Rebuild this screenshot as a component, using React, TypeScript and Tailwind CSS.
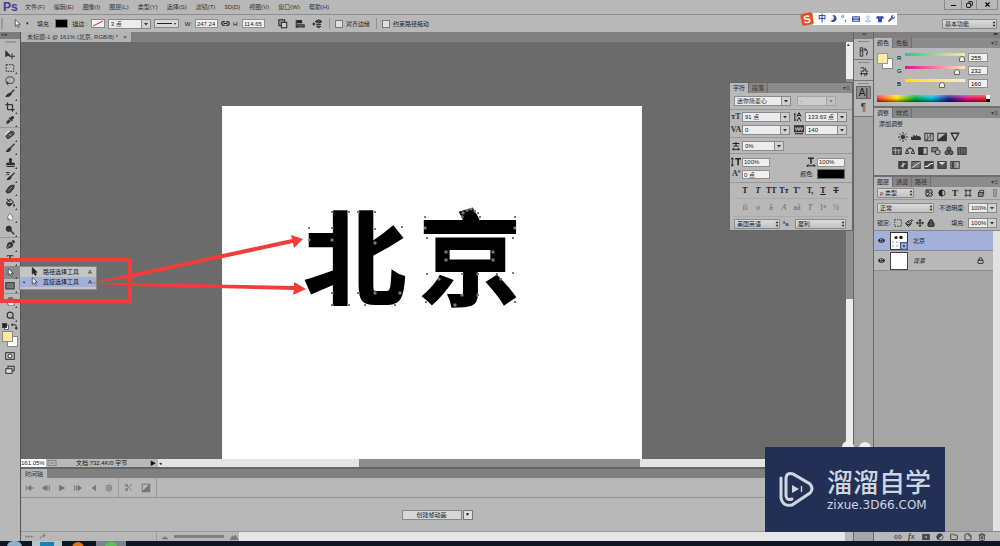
import React, { useState } from 'react';
import {
  FaBandAid, FaEraser, FaEye, FaEyeDropper, FaFillDrip, FaHandPaper,
  FaPenNib, FaStamp, FaTint, FaTshirt, FaWrench, FaMoon, FaKeyboard,
} from 'react-icons/fa';
import {
  Crop, Folder, Image, Lasso, Link2, Lock, Minus, Move, Paintbrush, Scissors,
  Search, Settings, StickyNote, Trash2, X, Copy,
} from 'lucide-react';

const menus = ['文件(F)', '编辑(E)', '图像(I)', '图层(L)', '类型(Y)', '选择(S)', '滤镜(T)', '3D(D)', '视图(V)', '窗口(W)', '帮助(H)'];

// 12x12 line icons
const Ic: React.FC<{ children: React.ReactNode; className?: string }> = ({ children, className = 'h-[10px] w-[10px]' }) => (
  <svg viewBox="0 0 12 12" className={`${className} shrink-0`} fill="none" stroke="currentColor" strokeWidth="1.2">
    {children}
  </svg>
);

const CursorIcon = ({ hollow = false }: { hollow?: boolean }) => (
  <Ic className="h-[9px] w-[9px]">
    <path d="M3 0.8 V9.6 L5.2 7.6 L6.8 11.2 L8.4 10.4 L6.8 7 H9.6 Z" fill={hollow ? '#fff' : '#222'} stroke="#222" strokeWidth="0.9" />
  </Ic>
);

type SelectProps = { label: string; options: string[]; className: string; arrow?: 'box' | 'updown'; disabled?: boolean };

const Select: React.FC<SelectProps> = ({ label, options, className, arrow = 'box', disabled }) => (
  <span className={`relative inline-flex h-[10px] shrink-0 ${className} ${disabled ? 'opacity-40' : ''}`}>
    <select
      aria-label={label}
      disabled={disabled}
      className={`h-full w-full appearance-none border border-[#8a8a8a] pl-[2px] leading-none text-[#222] outline-none ${arrow === 'box' ? 'bg-[#ececec]' : 'rounded-[1px] bg-linear-to-b from-[#dadada] to-[#c2c2c2]'}`}
    >
      {options.map(o => <option key={o}>{o}</option>)}
    </select>
    {arrow === 'box' ? (
      <svg viewBox="0 0 10 10" className="pointer-events-none absolute right-0 top-0 h-[10px] w-[10px]">
        <rect x="0.5" y="0.5" width="9" height="9" fill="#d0d0d0" stroke="#8a8a8a" />
        <path d="M3 4 H7 L5 6.5 Z" fill="#333" />
      </svg>
    ) : (
      <svg viewBox="0 0 6 10" className="pointer-events-none absolute right-0 top-0 h-[10px] w-[6px]">
        <path d="M1.5 4.3 L3 2 L4.5 4.3 Z M1.5 5.7 L3 8 L4.5 5.7 Z" fill="#333" />
      </svg>
    )}
  </span>
);

const Field: React.FC<{ label: string; value: string; className: string }> = ({ label, value, className }) => (
  <input
    aria-label={label}
    defaultValue={value}
    className={`h-[9px] shrink-0 border border-[#8f8f8f] bg-[#f0f0f0] px-px leading-none text-[#222] outline-none ${className}`}
  />
);

const PanelTabs: React.FC<{ tabs: string[] }> = ({ tabs }) => (
  <div className="flex h-[10px] shrink-0 items-stretch bg-[#8b8b8b]" role="tablist">
    {tabs.map((t, i) => (
      <button
        key={t}
        role="tab"
        aria-selected={i === 0}
        className={`border-r border-[#6f6f6f] px-[3px] leading-none ${i === 0 ? 'bg-[#b8b8b8] text-[#222]' : 'bg-[#868686] text-[#333]'}`}
      >
        {t}
      </button>
    ))}
    <button aria-label="面板菜单" className="ml-auto pr-[2px] leading-none text-[#444]">▾≡</button>
  </div>
);

const toolGroups: { height: string; tools: { name: string; icon: React.ReactNode }[] }[] = [
  {
    height: 'h-20',
    tools: [
      { name: '移动工具', icon: <Ic><path d="M1 1 V8 L3 6.5 H6 Z" fill="currentColor" /><path d="M8.5 4 V11 M5 7.5 H12" /></Ic> },
      { name: '矩形选框工具', icon: <Ic><rect x="1.5" y="2" width="9" height="8" strokeDasharray="2 1.2" /></Ic> },
      { name: '套索工具', icon: <Lasso className="h-[10px] w-[10px]" /> },
      { name: '快速选择工具', icon: <Ic><path d="M11 1 L6 6" strokeWidth="1.8" /><path d="M6.5 5 Q3 5 1 9 Q6 9.5 7.5 6.5 Z" fill="currentColor" /></Ic> },
      { name: '裁剪工具', icon: <Crop className="h-[10px] w-[10px]" strokeWidth={3} /> },
      { name: '吸管工具', icon: <FaEyeDropper className="h-2 w-2" /> },
    ],
  },
  {
    height: 'h-[110px]',
    tools: [
      { name: '污点修复画笔工具', icon: <Ic><path d="M2 9.5 Q0.5 8 2 6 L7 1.8 Q9 0.8 10.5 2.5 Q11.5 4 10 6 L5.5 9.5 Q3.5 11 2 9.5 Z" fill="#555" /><path d="M1 6 Q1 2 5 1.5" stroke="#eee" /><path d="M5 5 L7.5 7" stroke="#bbb" /></Ic> },
      { name: '画笔工具', icon: <Ic><path d="M11.5 1 L5.5 7" strokeWidth="1.6" /><path d="M6 6 Q3 6.5 1.5 10.5 Q6.5 10.5 7 7.5 Z" fill="currentColor" /></Ic> },
      { name: '仿制图章工具', icon: <FaStamp className="h-[9px] w-[9px]" /> },
      { name: '历史记录画笔工具', icon: <Ic><path d="M11.5 2 L6 7.5" strokeWidth="1.6" /><path d="M6.5 6.5 Q4 7 2.5 10.5 Q7 10.5 7.5 8 Z" fill="currentColor" /><path d="M1 2 H6 M1.5 5 Q3 3 5 4.5" /></Ic> },
      { name: '橡皮擦工具', icon: <Ic><path d="M1 9 L5 3 L8.5 1.5 H11 L10.5 5 L6.5 10 L3 11 Z" fill="#444" /><path d="M3.5 8.5 L8.5 3.5" stroke="#999" strokeWidth="0.8" /></Ic> },
      { name: '油漆桶工具', icon: <FaFillDrip className="h-[9px] w-[9px]" /> },
      { name: '模糊工具', icon: <FaTint className="h-2 w-2 fill-[#f2f2f2] stroke-[#555] stroke-[40px]" /> },
      { name: '减淡工具', icon: <Ic><circle cx="4.5" cy="4.5" r="3.2" fill="currentColor" /><path d="M7 7 L11 11" strokeWidth="1.8" /></Ic> },
    ],
  },
  {
    height: 'h-14',
    tools: [
      { name: '钢笔工具', icon: <FaPenNib className="h-[9px] w-[9px]" /> },
      { name: '横排文字工具', icon: <span className="font-['Liberation_Serif',serif] text-[10px] leading-none font-bold">T</span> },
      { name: '直接选择工具', icon: <CursorIcon hollow /> },
      { name: '矩形工具', icon: <Ic><rect x="1" y="2" width="10" height="7.5" fill="#777" /></Ic> },
    ],
  },
  {
    height: 'h-7',
    tools: [
      { name: '抓手工具', icon: <FaHandPaper className="h-[9px] w-[9px] fill-[#eee] stroke-[#444] stroke-[50px]" /> },
      { name: '缩放工具', icon: <Search className="h-[9px] w-[9px]" strokeWidth={3} /> },
    ],
  },
];

const ToolMenu = () => (
  <ul role="menu" className="absolute top-0 left-[19px] z-20 w-[78px] border border-[#8a8a8a] bg-[#c4c4c4] pb-[2px] text-left text-[#111]">
    {['路径选择工具', '直接选择工具'].map((name, i) => (
      <li key={name} role="none">
        <button role="menuitemradio" aria-checked={i === 1} className={`flex h-[10px] w-full items-center gap-[4px] pr-[4px] pl-[2px] leading-none ${i === 1 ? 'bg-[#a3b1d9]' : ''}`}>
          <span className="w-[4px]">{i === 1 ? '•' : ''}</span>
          <CursorIcon hollow={i === 1} />
          {name}
          <span className="ml-auto">A</span>
        </button>
      </li>
    ))}
  </ul>
);

const Toolbox = () => (
  <aside className="relative z-10 flex w-[21px] shrink-0 flex-col border-r border-[#555] bg-[#b8b8b8] text-[#333]">
    <div className="h-[7px] shrink-0 bg-[#7c7c7c] pl-[2px] text-[5px] leading-none text-[#333]">▸▸</div>
    <div className="flex h-[9px] shrink-0 items-start justify-center pt-[2px]"><div className="h-[2px] w-[11px] bg-[#999]" /></div>
    {toolGroups.map((g, gi) => (
      <div key={gi} className={`flex ${g.height} shrink-0 flex-col ${gi < 3 ? 'border-b border-[#9a9a9a]' : ''}`}>
        {g.tools.map(t => (
          <div key={t.name} className="relative flex flex-1">
            <button
              aria-label={t.name}
              title={t.name}
              className={`flex flex-1 items-center justify-center ${t.name === '直接选择工具' ? 'bg-[#8b8b8b]' : ''}`}
            >
              {t.icon}
            </button>
            {t.name !== '移动工具' && (
              <svg viewBox="0 0 2 2" className="absolute right-[3px] bottom-0 h-[2px] w-[2px]"><path d="M2 0 V2 H0 Z" fill="#333" /></svg>
            )}
            {t.name === '直接选择工具' && <ToolMenu />}
          </div>
        ))}
      </div>
    ))}
    <div className="flex h-[9px] items-center justify-between px-[2px]">
      <Ic className="h-[7px] w-[7px]"><rect x="4" y="4" width="7" height="7" fill="#fff" /><rect x="1" y="1" width="7" height="7" fill="#222" /></Ic>
      <Ic className="h-[7px] w-[7px]"><path d="M1 3 H6 Q9 3 9 6 V10 M3 1 L1 3 L3 5 M7 8 L9 10.5 L11 8" strokeWidth="1.8" /></Ic>
    </div>
    <div className="grid h-[16px] w-[18px] shrink-0 grid-cols-3 grid-rows-3 pl-[2px]">
      <div className="col-start-2 col-end-4 row-start-2 row-end-4 border border-[#888] bg-white" />
      <div className="col-start-1 col-end-3 row-start-1 row-end-3 border border-[#888] bg-[#ffe8a0]" />
    </div>
    <div className="flex flex-col items-center gap-[4px] pt-[4px]">
      <button aria-label="快速蒙版"><Ic><rect x="0.8" y="2" width="10.4" height="8" /><circle cx="6" cy="6" r="2.4" fill="#fff" /></Ic></button>
      <button aria-label="屏幕模式"><Ic><rect x="3.5" y="1.5" width="7.5" height="5.5" /><rect x="1" y="4.5" width="7.5" height="5.5" fill="#ddd" /></Ic></button>
    </div>
  </aside>
);

const MenuBar = () => (
  <header className="flex h-[15px] shrink-0 items-center border-b border-[#8e8e8e] pl-[3px]">
    <span className="w-[22px] text-[12px] leading-none font-bold text-[#3d3d98]">Ps</span>
    <nav className="flex gap-[9px]">
      {menus.map(m => <button key={m} className="leading-none text-[#333]">{m}</button>)}
    </nav>
    <div className="mr-[2px] ml-auto flex h-[10px] self-start border border-t-0 border-[#8a8a8a]">
      <button aria-label="最小化" className="flex w-[17px] items-end justify-center border-r border-[#8a8a8a]"><Minus className="h-[7px] w-[7px]" strokeWidth={4} /></button>
      <button aria-label="还原" className="flex w-[15px] items-center justify-center border-r border-[#8a8a8a]"><Copy className="h-[7px] w-[7px] -scale-x-100" strokeWidth={3} /></button>
      <button aria-label="关闭" className="flex w-[20px] items-center justify-center"><X className="h-[7px] w-[7px]" strokeWidth={4} /></button>
    </div>
  </header>
);

const OptionsBar = () => (
  <div className="flex h-[17px] shrink-0 items-center gap-[3px] pr-[3px] pl-[1px] text-[#222]">
    <div className="h-[11px] w-[2px] bg-[#999]" />
    <div className="ml-[7px] flex items-center gap-[4px]"><CursorIcon hollow /><span className="text-[5px]">▾</span></div>
    <span className="ml-[5px]">填充 :</span>
    <button aria-label="填充颜色" className="h-[9px] w-[13px] border border-[#777] bg-black" />
    <span className="ml-px">描边 :</span>
    <button aria-label="描边颜色" className="h-[9px] w-[14px] border border-[#888] bg-[#f4f4f4]">
      <svg viewBox="0 0 12 7" className="h-full w-full"><path d="M1 6 L11 1" stroke="#d22" /></svg>
    </button>
    <Select label="描边宽度" options={['3 点']} className="w-[43px]" />
    <button aria-label="描边类型" className="flex h-[9px] w-[25px] items-center gap-[2px] border border-[#888] bg-[#d8d8d8] px-[2px] text-[4px] leading-none">
      <i className="h-px flex-1 bg-[#222]" />▾
    </button>
    <span className="ml-[3px]">W:</span>
    <Field label="宽度" value="247.24" className="w-[23px]" />
    <Link2 className="h-[9px] w-[9px]" strokeWidth={3} />
    <span>H:</span>
    <Field label="高度" value="114.65" className="w-[23px]" />
    <div className="ml-[10px] flex gap-[7px]">
      <Ic><rect x="1" y="1" width="7" height="7" fill="#999" /><rect x="4" y="4" width="6.5" height="6.5" fill="#ccc" /></Ic>
      <Ic><path d="M1.5 1 V11" /><rect x="3" y="2" width="5" height="2.6" fill="currentColor" /><rect x="3" y="7" width="8" height="2.6" fill="#777" /></Ic>
      <Ic><path d="M0.5 6 H4 M2.2 4 V8" /><path d="M4 3 L8 1 L12 3 L8 5 Z M5 6 L8 7.5 L11 6 M5 8.5 L8 10.5 L11 8.5" fill="#555" /></Ic>
    </div>
    <div className="ml-[4px] h-[11px] w-px bg-[#929292]" />
    <label className="ml-[2px] flex items-center gap-[3px]">
      <input type="checkbox" className="h-[8px] w-[8px] appearance-none border border-[#777] bg-[#dedede]" />对齐边缘
    </label>
    <div className="ml-[3px] h-[11px] w-px bg-[#929292]" />
    <label className="ml-[2px] flex items-center gap-[3px]">
      <input type="checkbox" className="h-[8px] w-[8px] appearance-none border border-[#777] bg-[#dedede]" />约束路径拖动
    </label>
    <div className="ml-auto flex">
      <Select label="工作区" options={['基本功能']} className="w-[55px]" arrow="updown" />
    </div>
  </div>
);

// Path anchors, in pixels from the top left of the lettering
const anchors = [
  [32, 17], [49, 17], [58, 17], [75, 17], [9, 33], [32, 33], [9, 45], [32, 45], [75, 34], [102, 32], [75, 48],
  [32, 98], [49, 110], [32, 110], [58, 98], [75, 98], [100, 98], [65, 110], [95, 110],
  [125, 22], [162, 22], [180, 22], [215, 22], [215, 33], [125, 33], [163, 18], [167, 15], [171, 14], [175, 16], [178, 18],
  [127, 43], [213, 43], [213, 78], [197, 79], [127, 79], [146, 57], [193, 57], [193, 65], [146, 65],
  [139, 84], [126, 107], [162, 79], [178, 79], [178, 100], [162, 100], [155, 110], [201, 84], [215, 107],
];

const Artboard = () => (
  <div className="relative min-h-[354px] w-[420px] bg-white">
    <div className="flex gap-[13px] pt-[96px] pl-[82px] font-['Noto_Sans_CJK_SC',sans-serif] text-[102px] leading-none font-bold text-black [-webkit-text-stroke:2px_black]">
      <span>北</span>
      <span>京</span>
    </div>
    <svg viewBox="0 0 230 120" className="absolute top-[89px] left-[78px] h-[120px] w-[230px]">
      {anchors.map(([x, y]) => (
        <rect key={`${x}-${y}`} x={x - 1} y={y - 1} width="2" height="2" fill="#111" stroke="#fff" strokeWidth="0.5" />
      ))}
    </svg>
  </div>
);

const DocumentView = () => (
  <section className="flex min-h-0 flex-1 flex-col">
    <div className="flex h-[10px] shrink-0 bg-[#808080]">
      <div className="flex items-center gap-[5px] bg-[#b4b4b4] pr-[4px] pl-[6px] leading-none text-[#333]">
        未标题-1 @ 161% (北京, RGB/8) *
        <button aria-label="关闭文档" className="leading-none">×</button>
      </div>
    </div>
    <div className="flex min-h-0 flex-1">
      <div className="flex min-w-0 flex-1 flex-col">
        <div className="min-h-0 flex-1 overflow-hidden bg-[#6b6b6b] pt-16 pl-[201px]"><Artboard /></div>
        <div className="flex h-[8px] shrink-0 items-center bg-[#b8b8b8] leading-none text-[#111]">
          <div className="h-full w-[25px] bg-white pt-px">161.05%</div>
          <Ic className="h-[8px] w-[12px]"><rect x="0" y="2" width="12" height="8" stroke="#777" /><path d="M3 6 H9" stroke="#777" /></Ic>
          <span className="ml-[18px]">文档:732.4K/0 字节</span>
          <span className="ml-auto" />
          <div className="flex h-full w-[696px] items-center">
            <span className="w-[8px]">▶</span>
            <div className="flex h-full flex-1 items-center bg-[#e4e4e4]">
              <span className="w-[201px] pl-px text-[5px]">◂</span>
              <div className="h-full w-[281px] bg-[#8d8d8d]" />
            </div>
          </div>
        </div>
      </div>
      <div className="flex w-[7px] shrink-0 flex-col bg-[#ececec]">
        <span className="h-[8px] pl-px text-[5px] leading-none text-[#333]">▴</span>
        <div className="mt-[29px] h-[220px] bg-[#8d8d8d]" />
      </div>
    </div>
  </section>
);

const Timeline = () => (
  <section className="shrink-0 border-t-2 border-[#666] bg-[#b8b8b8] text-[#777]">
    <div className="flex h-[9px] bg-[#808080]">
      <button className="bg-[#b4b4b4] px-[4px] leading-none text-[#333]">时间轴</button>
    </div>
    <div className="flex h-[20px] items-center border-b border-[#939393] pl-[4px]">
      <div className="flex h-full items-center gap-[6px] border-r border-[#999] pr-[5px]">
        {[
          <path key="a" d="M1.5 3 V9 M11 6 H7 M7 3 L3 6 L7 9 Z" fill="currentColor" />,
          <path key="b" d="M6 3 L2 6 L6 9 Z M8 3 V9 M10 3 V9" fill="currentColor" />,
          <path key="c" d="M3 3 L9 6 L3 9 Z" fill="currentColor" />,
          <path key="d" d="M6 3 L10 6 L6 9 Z M4 3 V9 M2 3 V9" fill="currentColor" />,
          <path key="e" d="M8 3 L4 6 L8 9 Z" fill="currentColor" />,
        ].map((d, i) => <button key={i} aria-label="播放控制"><Ic>{d}</Ic></button>)}
        <button aria-label="设置"><Settings className="h-[8px] w-[8px]" strokeWidth={3} /></button>
      </div>
      <div className="flex h-full items-center gap-[8px] border-r border-[#999] px-[5px]">
        <button aria-label="剪切"><Scissors className="h-[9px] w-[9px]" strokeWidth={2.5} /></button>
        <button aria-label="过渡"><Ic><rect x="1.5" y="1.5" width="9" height="9" /><path d="M10 2 V10 H2 Z" fill="currentColor" /></Ic></button>
      </div>
    </div>
    <div className="flex h-[33px] items-center justify-center gap-px text-[#111]">
      <button className="h-[10px] w-[60px] border border-[#888] bg-[#d6d6d6] leading-none">创建帧动画</button>
      <button aria-label="选择动画类型" className="flex h-[10px] w-[10px] items-center justify-center border border-[#777] bg-[#dedede] text-[5px] leading-none">▼</button>
    </div>
    <div className="flex h-[10px] items-center border-t border-[#999] pl-[3px]">
      <div className="flex w-[133px] items-center gap-[5px] border-r border-[#999]">
        <Ic className="h-[7px] w-[10px]"><path d="M0 6 H3 M4.5 6 H7.5 M9 6 H12" strokeWidth="3" /></Ic>
        <Ic className="h-[7px] w-[8px]"><path d="M1 10 Q2 4 8 4 M6 1 L10 4 L6 7" strokeWidth="1.6" /></Ic>
      </div>
      <div className="flex w-[82px] items-center gap-[5px] pl-[4px]">
        <Ic className="h-[6px] w-[8px]"><path d="M0 10 L6 5 L12 10 Z" fill="currentColor" /></Ic>
        <div className="h-[3px] flex-1 bg-[#808080]" />
        <Ic className="h-[8px] w-[10px]"><path d="M0 10 L4 4 L6 7 L8 3 L12 10 Z" fill="currentColor" /></Ic>
      </div>
      <div className="h-full flex-1 bg-[#e6e6e6]" />
      <div className="w-[8px]" />
    </div>
  </section>
);

const Dock = () => (
  <aside className="flex w-[21px] shrink-0 flex-col border-x border-[#666] bg-[#a5a5a5] text-[#333]">
    <div className="h-[7px] bg-[#808080] text-center text-[4px] leading-none">◂◂</div>
    <div className="flex h-[21px] flex-col items-center gap-[5px] border-b border-[#777] bg-[#b8b8b8] pt-[2px]">
      <i className="h-px w-[11px] bg-[#888]" />
      <Ic><path d="M1.5 1 H4.5 V11 H1.5 Z M1.5 4.5 H4.5" /><path d="M6.5 3 H9 Q11 5 9 10 M8 1 L6 3 L8 5" /></Ic>
    </div>
    <div className="flex h-[21px] flex-col items-center gap-[4px] border-b border-[#777] bg-[#b8b8b8] pt-[2px]">
      <i className="h-px w-[11px] bg-[#888]" />
      <Ic><path d="M2 1 H6 V5 H2 M8 1 V5 H11 M1 8 H11 M3 6.5 V10 M7 8 V11 M9 6.5 V10" /></Ic>
    </div>
    <div className="flex h-[36px] flex-col items-center gap-[2px] border-b border-[#777] bg-[#b8b8b8] pt-[2px]">
      <i className="h-px w-[11px] bg-[#888]" />
      <button aria-label="字符" className="h-[13px] w-[15px] border border-[#666] bg-[#8e8e8e] text-[10px] leading-none text-[#222]">A|</button>
      <button aria-label="段落" className="h-[13px] text-[10px] leading-none">¶</button>
    </div>
  </aside>
);

const channels = [
  { name: 'R', value: 255, track: 'bg-[linear-gradient(to_right,#2fc68c,#ffe8a0)]' },
  { name: 'G', value: 232, track: 'bg-[linear-gradient(to_right,#e0109a,#ffe8a0)]' },
  { name: 'B', value: 160, track: 'bg-[linear-gradient(to_right,#ffdf10,#f4ecd8)]' },
];

const ColorPanel = () => {
  const [rgb, setRgb] = useState(channels.map(c => c.value));
  return (
    <section className="h-[68px] shrink-0">
      <PanelTabs tabs={['颜色', '色板']} />
      <div className="flex gap-[4px] px-[3px] pt-[5px]">
        <div className="grid h-[16px] w-[16px] shrink-0 grid-cols-3 grid-rows-3">
          <div className="col-start-2 col-end-4 row-start-2 row-end-4 border border-[#888] bg-white" />
          <div className="col-start-1 col-end-3 row-start-1 row-end-3 border border-[#999] bg-[#ffe8a0]" />
        </div>
        <div className="flex min-w-0 flex-1 flex-col gap-[4px] pr-[9px]">
          {channels.map((c, i) => (
            <div key={c.name} className="flex h-[9px] items-center gap-[3px]">
              <label htmlFor={`ch-${c.name}`} className="w-[5px] shrink-0 leading-none">{c.name}</label>
              <input
                id={`ch-${c.name}`}
                type="range"
                min={0}
                max={255}
                value={rgb[i]}
                onChange={e => setRgb(rgb.map((v, k) => (k === i ? Number(e.target.value) : v)))}
                className={`h-[9px] w-0 min-w-0 flex-1 appearance-none bg-[length:100%_3px] bg-top bg-no-repeat ${c.track} [&::-webkit-slider-thumb]:mt-[3px] [&::-webkit-slider-thumb]:h-[6px] [&::-webkit-slider-thumb]:w-[6px] [&::-webkit-slider-thumb]:appearance-none [&::-webkit-slider-thumb]:rounded-t-full [&::-webkit-slider-thumb]:border [&::-webkit-slider-thumb]:border-[#666] [&::-webkit-slider-thumb]:bg-[#eee]`}
              />
              <input aria-label={`${c.name} 值`} value={rgb[i]} readOnly className="h-[9px] w-[20px] shrink-0 border border-[#8f8f8f] bg-[#f0f0f0] px-[2px] leading-none" />
            </div>
          ))}
        </div>
      </div>
      <div className="mx-[3px] mt-[7px] flex h-[7px] pr-[7px]">
        <div className="flex-1 bg-[linear-gradient(to_bottom,rgba(255,255,255,.35),transparent,rgba(0,0,0,.55)),linear-gradient(to_right,#e33,#fd0_18%,#0a4_35%,#0bd_50%,#228_66%,#d18_82%,#e22)]" />
        <div className="flex w-[4px] flex-col"><i className="flex-1 bg-white" /><i className="flex-1 bg-black" /></div>
      </div>
    </section>
  );
};

const adjustRows: React.ReactNode[][] = [
  [
    <g key="1"><circle cx="6" cy="6" r="2.2" fill="currentColor" /><path d="M6 0 V2.5 M6 9.5 V12 M0 6 H2.5 M9.5 6 H12 M2 2 L3.5 3.5 M8.5 8.5 L10 10 M10 2 L8.5 3.5 M2 10 L3.5 8.5" /></g>,
    <path key="2" d="M0.5 9 V6 L2 7 L3.5 4 L5 7 L6.5 4 L8 6 L9.5 5 L11.5 7 V9 Z" fill="currentColor" />,
    <g key="3"><rect x="1" y="1.5" width="10" height="9" /><path d="M1 10 Q6 9 6 6 T11 2 M4 2 V10 M8 2 V10" strokeWidth="0.8" /></g>,
    <g key="4"><rect x="1" y="1.5" width="10" height="9" /><path d="M11 2 V10 H1 Z" fill="currentColor" /></g>,
    <path key="5" d="M1.5 1.5 H10.5 L6 10 Z" strokeWidth="1.6" />,
  ],
  [
    <g key="1"><rect x="1" y="2" width="10" height="8" fill="#555" /><path d="M1 5 H11 M4 2 V10 M8 5 V10" stroke="#ccc" strokeWidth="0.8" /></g>,
    <path key="2" d="M6 1 V4 M2 4 Q6 1 10 4 M0.5 9 L2.5 4 L4.5 9 Z M7.5 9 L9.5 4 L11.5 9 Z" />,
    <g key="3"><rect x="1" y="2" width="10" height="8" /><rect x="1" y="2" width="5" height="8" fill="currentColor" /></g>,
    <g key="4"><rect x="1" y="2" width="7" height="5" fill="#888" /><circle cx="8" cy="7.5" r="3" fill="#aaa" /></g>,
    <g key="5" fill="#666"><circle cx="6" cy="3.6" r="2.4" /><circle cx="3.5" cy="8" r="2.4" /><circle cx="8.5" cy="8" r="2.4" /></g>,
    <g key="6"><rect x="1" y="2" width="10" height="8" fill="#777" /><path d="M1 4.6 H11 M1 7.4 H11 M4.3 2 V10 M7.6 2 V10" strokeWidth="0.7" /></g>,
  ],
  [
    <g key="1"><rect x="1" y="2" width="10" height="8" fill="#444" /><path d="M3 8 L9 4 M6 3 V9" stroke="#ddd" /></g>,
    <g key="2"><rect x="1" y="2" width="10" height="8" fill="#777" /><path d="M1 9 L5 7 L7 5 L11 3" stroke="#ddd" /></g>,
    <g key="3"><rect x="1" y="2" width="10" height="8" fill="#444" /><path d="M1 8 Q5 8 6 6 T11 4" stroke="#eee" strokeWidth="1.6" /></g>,
    <g key="4"><rect x="1" y="2" width="10" height="8" fill="#555" /><path d="M2 2.5 L6 6 L10 2.5 Z" fill="#ddd" stroke="none" /></g>,
    <g key="5"><rect x="1" y="2" width="10" height="8" /><rect x="2" y="2.5" width="3" height="7" fill="#444" stroke="none" /><rect x="5" y="2.5" width="3" height="7" fill="#888" stroke="none" /></g>,
  ],
];

const AdjustPanel = () => (
  <section className="h-[69px] shrink-0 border-t-2 border-[#6f6f6f]">
    <PanelTabs tabs={['调整', '样式']} />
    <p className="pt-[2px] pl-[5px] leading-[8px] text-[#222]">添加调整</p>
    <div className="flex flex-col gap-[4px] pt-[4px] pr-[16px]">
      {adjustRows.map((row, i) => (
        <div key={i} className="flex justify-center gap-[3px] text-[#333]">
          {row.map((d, k) => <button key={k} aria-label={`调整 ${i + 1}-${k + 1}`}><Ic>{d}</Ic></button>)}
        </div>
      ))}
    </div>
  </section>
);

const LayersPanel = () => (
  <section className="flex min-h-0 flex-1 flex-col border-t-2 border-[#6f6f6f] text-[#222]">
    <PanelTabs tabs={['图层', '通道', '路径']} />
    <div className="flex h-[13px] shrink-0 items-center gap-[5px] border-b border-[#999] px-[3px]">
      <Select label="筛选类型" options={['ρ 类型']} className="w-[37px]" arrow="updown" />
      <span className="w-px" />
      <Image className="h-[8px] w-[8px]" strokeWidth={3} />
      <Ic className="h-[8px] w-[8px]"><circle cx="6" cy="6" r="4.6" /><path d="M6 1.4 A4.6 4.6 0 0 0 6 10.6 Z" fill="currentColor" /></Ic>
      <span className="w-[8px] text-center font-['Liberation_Serif',serif] text-[9px] leading-none font-bold">T</span>
      <Ic className="h-[8px] w-[8px]"><path d="M3 0 V12 M9 0 V12 M1 2.5 H11 M1 9.5 H11" /></Ic>
      <Ic className="h-[8px] w-[8px]"><rect x="2" y="5" width="7" height="6" fill="#888" /><path d="M4 5 V2 H10 V8" /></Ic>
      <i className="ml-auto h-[8px] w-[4px] border border-[#888] bg-[#999]" />
    </div>
    <div className="flex h-[16px] shrink-0 items-center gap-[3px] px-[3px]">
      <Select label="混合模式" options={['正常']} className="w-[57px]" arrow="updown" />
      <span className="ml-auto">不透明度:</span>
      <Select label="不透明度" options={['100%']} className="w-[29px]" />
    </div>
    <div className="flex h-[14px] shrink-0 items-center gap-[3px] px-[3px]">
      <span>锁定:</span>
      <Ic className="h-[8px] w-[8px]"><rect x="1" y="1" width="10" height="10" strokeDasharray="2 1.5" /></Ic>
      <Paintbrush className="h-[8px] w-[8px]" strokeWidth={3} />
      <Move className="h-[8px] w-[8px]" strokeWidth={3} />
      <Lock className="h-[8px] w-[8px] fill-[#555]" strokeWidth={3} />
      <span className="ml-auto">填充:</span>
      <Select label="填充" options={['100%']} className="w-[29px]" />
    </div>
    <div className="flex min-h-0 flex-1 border-t border-[#888]">
      <ul className="min-w-0 flex-1 bg-[#a5a5a5]">
        <li className="flex h-[20px] items-center gap-[5px] border-b border-[#8d8d8d] bg-[#a3b1d9] pl-[4px]">
          <FaEye className="h-[7px] w-[7px]" />
          <svg viewBox="0 0 18 18" className="h-[18px] w-[18px]">
            <rect x="0.5" y="0.5" width="17" height="17" fill="#fff" stroke="#333" />
            <path d="M2 10 H10 M2 14 H10" stroke="#ccc" strokeWidth="2" strokeDasharray="2 2" />
            <circle cx="6" cy="5.5" r="1.6" fill="#222" /><circle cx="11" cy="5.5" r="1.8" fill="#222" />
            <rect x="10" y="10" width="8" height="8" fill="#405a98" /><rect x="12" y="12" width="4" height="4" fill="none" stroke="#fff" strokeWidth="0.8" />
          </svg>
          <span>北京</span>
        </li>
        <li className="flex h-[20px] items-center gap-[5px] border-b border-[#8d8d8d] bg-[#b8b8b8] pr-[9px] pl-[4px]">
          <FaEye className="h-[7px] w-[7px]" />
          <i className="h-[18px] w-[18px] border border-[#444] bg-white" />
          <span className="italic">背景</span>
          <Lock className="ml-auto h-[7px] w-[7px]" strokeWidth={3} />
        </li>
      </ul>
      <div className="w-[7px] bg-[#e2e2e2]" />
    </div>
    <footer className="flex h-[10px] shrink-0 items-center justify-end gap-[6px] border-t border-[#888] pr-[14px] text-[#444]">
      <Link2 className="h-[8px] w-[8px]" strokeWidth={2.5} />
      <span className="w-[8px] font-['Liberation_Serif',serif] text-[8px] leading-none font-bold italic">fx</span>
      <Ic className="h-[8px] w-[8px]"><rect x="1" y="2" width="10" height="8" fill="#444" /><circle cx="6" cy="6" r="2" fill="#ccc" /></Ic>
      <Ic className="h-[8px] w-[8px]"><circle cx="6" cy="6" r="4.6" /><path d="M9 2.5 A4.6 4.6 0 0 0 3 9.5 Z" fill="currentColor" /></Ic>
      <Folder className="h-[8px] w-[8px]" strokeWidth={3} />
      <StickyNote className="h-[8px] w-[8px]" strokeWidth={3} />
      <Trash2 className="h-[8px] w-[8px]" strokeWidth={3} />
    </footer>
  </section>
);

const Glyph: React.FC<{ children: React.ReactNode }> = ({ children }) => (
  <span className="flex w-[10px] shrink-0 justify-center font-['Liberation_Serif',serif] text-[8px] leading-none font-bold text-[#333]">{children}</span>
);

const CharacterPanel = () => (
  <div className="absolute top-[82px] right-[147px] z-20 w-[124px] border border-[#666] bg-[#b8b8b8] text-[#222]">
    <PanelTabs tabs={['字符', '段落']} />
    <div className="flex h-[17px] items-center gap-[6px] border-b border-[#999] pl-[4px]">
      <Select label="字体" options={['迷你简菱心']} className="w-[57px]" />
      <Select label="字体样式" options={['-']} className="w-[39px]" disabled />
    </div>
    <div className="flex flex-col gap-[3px] border-b border-[#999] py-[2px] pl-px">
      <div className="flex items-center gap-px">
        <Glyph>тT</Glyph><Select label="字号" options={['91 点']} className="w-[48px]" />
        <span className="w-[2px]" />
        <Ic><path d="M3.5 5.5 L6 0.8 L8.5 5.5 M4.5 4 H7.5 M3.5 11.2 L6 6.5 L8.5 11.2 M1 2 V10 M0 3 L1 1.5 L2 3 M0 9 L1 10.5 L2 9" /></Ic>
        <Select label="行距" options={['133.63 点']} className="w-[42px]" />
      </div>
      <div className="flex items-center gap-px">
        <Glyph>VA</Glyph><Select label="字距微调" options={['0']} className="w-[48px]" />
        <span className="w-[2px]" />
        <Ic><rect x="0" y="1" width="12" height="7" fill="#444" /><path d="M1.5 3 L3 6.5 L4.5 3 L6 6.5 L7.5 3 L9 6.5 L10.5 3" stroke="#eee" strokeWidth="0.8" /><path d="M1 10.5 H11" /></Ic>
        <Select label="字距调整" options={['140']} className="w-[42px]" />
      </div>
    </div>
    <div className="flex h-[16px] items-center gap-px border-b border-[#999] pl-px">
      <Ic><path d="M2 3 H10 M6 1 V6 M3 6 H9 M2 10 H10 M3.5 8 L2 10 L3.5 11.5 M8.5 8 L10 10 L8.5 11.5" /></Ic>
      <Select label="比例间距" options={['0%']} className="w-[42px]" />
    </div>
    <div className="flex flex-col gap-[2px] border-b border-[#999] py-[3px] pl-px">
      <div className="flex items-center gap-px">
        <Ic><path d="M1.5 1 V11 M0 3 L1.5 1 L3 3 M0 9 L1.5 11 L3 9" /><path d="M5 2 H12 M8.5 2 V10" strokeWidth="1.8" /></Ic>
        <Field label="垂直缩放" value="100%" className="w-[28px]" />
        <span className="ml-auto" />
        <Ic><path d="M2.5 1.5 H9.5 M6 1.5 V8" strokeWidth="1.8" /><path d="M1 10.5 H11 M3 9 L1 10.5 L3 12 M9 9 L11 10.5 L9 12" /></Ic>
        <Field label="水平缩放" value="100%" className="mr-[7px] w-[28px]" />
      </div>
      <div className="flex items-center gap-px">
        <Glyph>Aª</Glyph><Field label="基线偏移" value="0 点" className="w-[28px]" />
        <span className="ml-auto">颜色:</span>
        <button aria-label="文字颜色" className="mr-[7px] ml-[2px] h-[10px] w-[28px] border border-[#666] bg-black" />
      </div>
    </div>
    <div className="mx-[4px] flex h-[16px] items-center gap-[3px] border-b border-[#aaa] px-[6px] font-['Liberation_Serif',serif] text-[8px] leading-none font-bold text-[#222]">
      <button className="w-[10px]">T</button>
      <button className="w-[10px] italic">T</button>
      <button className="w-[10px]">TT</button>
      <button className="w-[10px]">Tт</button>
      <button className="w-[10px]">T'</button>
      <button className="w-[10px]">T,</button>
      <button className="w-[10px] underline">T</button>
      <button className="w-[10px] line-through">T</button>
    </div>
    <div className="mx-[4px] flex h-[18px] items-center gap-[3px] border-b border-[#aaa] px-[6px] font-['Liberation_Serif',serif] text-[8px] leading-none text-[#666]">
      <button className="w-[10px]">fi</button>
      <button className="w-[10px] italic">σ</button>
      <button className="w-[10px]">ā</button>
      <button className="w-[10px] italic">A</button>
      <button className="w-[10px]">aā</button>
      <button className="w-[10px] italic">T</button>
      <button className="w-[10px]">1ˢᵗ</button>
      <button className="w-[10px]">½</button>
    </div>
    <div className="flex h-[13px] items-center gap-[3px] pl-[4px]">
      <Select label="语言" options={['美国英语']} className="w-[46px]" arrow="updown" />
      <span className="w-[9px] leading-none">ªa</span>
      <Select label="消除锯齿" options={['犀利']} className="w-[51px]" arrow="updown" />
    </div>
  </div>
);

const ImeBar = () => (
  <div className="absolute top-[12px] right-[103px] z-20 flex h-[13px] items-center text-[#3a4da8]">
    <span className="z-10 flex h-[12px] w-[12px] -rotate-12 items-center justify-center rounded-[2px] bg-[#ee4b22] text-[11px] leading-none font-bold text-white">S</span>
    <div className="flex h-[12px] items-center gap-[4px] bg-white pr-[2px] pl-[5px]">
      <span className="text-[8px] leading-none font-bold">中</span>
      <FaMoon className="h-[7px] w-[7px] -scale-x-100" />
      <span className="w-[7px] text-[8px] leading-none font-bold">°,</span>
      <FaKeyboard className="h-[8px] w-[8px]" />
      <Ic className="h-[8px] w-[8px]"><circle cx="6" cy="3.5" r="2" stroke="#9aa6d8" /><path d="M2 10 Q6 4 10 10 Z" stroke="#9aa6d8" /></Ic>
      <FaTshirt className="h-[8px] w-[8px]" />
      <FaWrench className="h-[7px] w-[7px]" />
    </div>
  </div>
);

// Red box round the tool flyout and the two arrows to the lettering
const Callouts = () => (
  <svg viewBox="0 0 310 310" className="pointer-events-none absolute top-0 left-0 z-30 h-[310px] w-[310px]" fill="#f23c3a">
    <rect x="2" y="260" width="128" height="41" fill="none" stroke="#f23c3a" strokeWidth="4" />
    <path d="M90 283 L130 274 L292 239 L291 235 L303 239 L294 248 L293 243 L130 278 Z" />
    <path d="M90 283 L130 283 L294 286 L294 282 L306 289 L293 295 L294 290 L130 286 Z" />
  </svg>
);

const Watermark = () => (
  <div className="absolute right-[55px] bottom-[14px] z-30">
    <i className="absolute -top-[6px] left-[77px] h-[12px] w-[12px] rounded-full bg-[#eee]" />
    <i className="absolute -top-[5px] left-[94px] h-[12px] w-[12px] rounded-full bg-[#eee]" />
    <div className="relative flex h-[85px] w-[180px] items-center gap-[12px] bg-[#223056] pl-[14px] text-[#d0d5e0]">
      <svg viewBox="0 0 36 38" className="h-[38px] w-[36px] shrink-0" fill="none" stroke="currentColor" strokeWidth="3" strokeLinecap="round">
        <path d="M2 7 V27 Q4 36 13 34 L31 22 Q35 18 31 13 L14 3 Q7 1 7 8 V25 Q8 30 13 28" />
        <path d="M13 14 L20 18 L13 22 Z" fill="currentColor" stroke="none" />
        <path d="M22.5 15.5 V20.5" strokeWidth="1.4" />
      </svg>
      <div className="flex flex-col whitespace-nowrap">
        <span className="text-[26px] leading-[30px] font-medium">溜溜自学</span>
        <span className="font-['DejaVu_Sans',sans-serif] text-[12px] leading-[14px]">zixue.3D66.COM</span>
      </div>
    </div>
  </div>
);

const Taskbar = () => (
  <div className="flex h-[5px] shrink-0 items-start overflow-hidden bg-[#0d1622] pl-[7px]">
    <i className="h-[12px] w-[15px] rounded-full bg-[#8fb0c8]" />
    <div className="ml-[10px] flex h-[5px] w-[30px] justify-center bg-[#b8c4cc]"><i className="mt-px h-[4px] w-[14px] bg-[#1583b8]" /></div>
    <i className="mt-px ml-[10px] h-[12px] w-[12px] rounded-full bg-[#e07818]" />
    <div className="ml-[12px] flex h-[5px] w-[30px] justify-center bg-[#7d8489]"><i className="mt-px h-[10px] w-[12px] rounded-full bg-[#5cc05a]" /></div>
  </div>
);

export default function App() {
  return (
    <div className="relative flex h-screen flex-col overflow-hidden bg-[#b8b8b8] font-['Liberation_Sans','Noto_Sans_CJK_SC',sans-serif] text-[6px] leading-none whitespace-nowrap">
      <MenuBar />
      <OptionsBar />
      <main className="flex min-h-0 flex-1">
        <Toolbox />
        <div className="flex min-w-0 flex-1 flex-col">
          <DocumentView />
          <Timeline />
        </div>
        <Dock />
        <aside className="flex w-[126px] shrink-0 flex-col">
          <div className="h-[6px] shrink-0 bg-[#808080] pr-[2px] text-right text-[4px] leading-none">▸▸</div>
          <ColorPanel />
          <AdjustPanel />
          <LayersPanel />
        </aside>
      </main>
      <Taskbar />
      <CharacterPanel />
      <ImeBar />
      <Callouts />
      <Watermark />
    </div>
  );
}
